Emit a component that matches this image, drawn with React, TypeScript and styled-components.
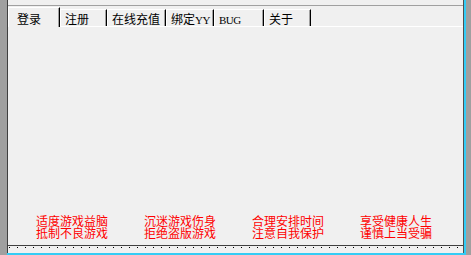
import React from "react";
import styled, { createGlobalStyle } from "styled-components";

const GlobalStyle = createGlobalStyle`
  html, body {
    margin: 0;
    padding: 0;
    background: #a0a0a0;
  }
`;

const Frame = styled.div`
  display: flex;
  width: 471px;
  height: 255px;
  overflow: hidden;
  background: #a0a0a0;
  font-family: "Noto Sans CJK SC", sans-serif;
  font-size: 12px;
`;

const LeftRail = styled.div`
  width: 7px;
  flex: none;
`;

const Window = styled.div`
  width: 459px;
  flex: none;
  display: flex;
  flex-direction: column;
  border-right: 2px solid #33ccf5;
  border-bottom: 2px solid #33ccf5;
  box-sizing: border-box;
`;

const Panel = styled.div`
  flex: 1;
  display: flex;
  flex-direction: column;
  background: #f0f0f0;
  border-left: 1px solid #404040;
  border-right: 1px solid #505050;
`;

const TopGap = styled.div`
  height: 5px;
  border-bottom: 1px solid #a0a0a0;
`;

const TabStrip = styled.div`
  display: flex;
  align-items: flex-end;
  height: 20px;
  border-bottom: 1px solid #ffffff;
`;

const Tab = styled.div<{ $w: number; $active?: boolean }>`
  box-sizing: border-box;
  width: ${(p) => p.$w}px;
  height: ${(p) => (p.$active ? 20 : 17)}px;
  margin-bottom: ${(p) => (p.$active ? -1 : 0)}px;
  padding-left: ${(p) => (p.$active ? 8 : 4)}px;
  padding-top: ${(p) => (p.$active ? 5 : 3)}px;
  line-height: 12px;
  color: #000;
  white-space: nowrap;
  background: #f0f0f0;
  border-top: 1px solid #ffffff;
  border-left: 1px solid #ffffff;
  border-right: 1px solid #000000;
  box-shadow: inset -1px 0 0 #a0a0a0;
`;

const Latin = styled.span`
  font-family: "Liberation Serif", serif;
  font-size: 11px;
  letter-spacing: -0.5px;
`;

const Pane = styled.div`
  flex: 1;
  display: flex;
  flex-direction: column;
  justify-content: flex-end;
`;

const SloganRow = styled.div`
  display: grid;
  grid-template-columns: repeat(4, 108px);
  padding-left: 28px;
  margin-bottom: 6px;
`;

const Slogan = styled.div`
  color: #ff0000;
  font-size: 12px;
  line-height: 12px;
  white-space: nowrap;
`;

const Ruler = styled.div`
  height: 3px;
  border-top: 1px solid #404040;
  background-image: linear-gradient(to right, #000 1px, transparent 1px);
  background-size: 8px 1px;
  background-repeat: repeat-x;
  background-position: 1px 1px;
  margin-bottom: 4px;
`;

const tabs: { label: React.ReactNode; key: string; w: number; active?: boolean }[] = [
  { key: "login", label: "登录", w: 52, active: true },
  { key: "reg", label: "注册", w: 47 },
  { key: "pay", label: "在线充值", w: 59 },
  { key: "bind", label: <>绑定<Latin>YY</Latin></>, w: 48 },
  { key: "bug", label: <Latin>BUG</Latin>, w: 50 },
  { key: "about", label: "关于", w: 47 },
];

const slogans = [
  ["适度游戏益脑", "抵制不良游戏"],
  ["沉迷游戏伤身", "拒绝盗版游戏"],
  ["合理安排时间", "注意自我保护"],
  ["享受健康人生", "谨慎上当受骗"],
];

export default function App() {
  return (
    <Frame>
      <GlobalStyle />
      <LeftRail />
      <Window>
        <Panel>
          <TopGap />
          <TabStrip>
            {tabs.map((t) => (
              <Tab key={t.key} $w={t.w} $active={t.active}>
                {t.label}
              </Tab>
            ))}
          </TabStrip>
          <Pane>
            <SloganRow>
              {slogans.map((s) => (
                <Slogan key={s[0]}>
                  {s[0]}
                  <br />
                  {s[1]}
                </Slogan>
              ))}
            </SloganRow>
          </Pane>
          <Ruler />
        </Panel>
      </Window>
    </Frame>
  );
}
